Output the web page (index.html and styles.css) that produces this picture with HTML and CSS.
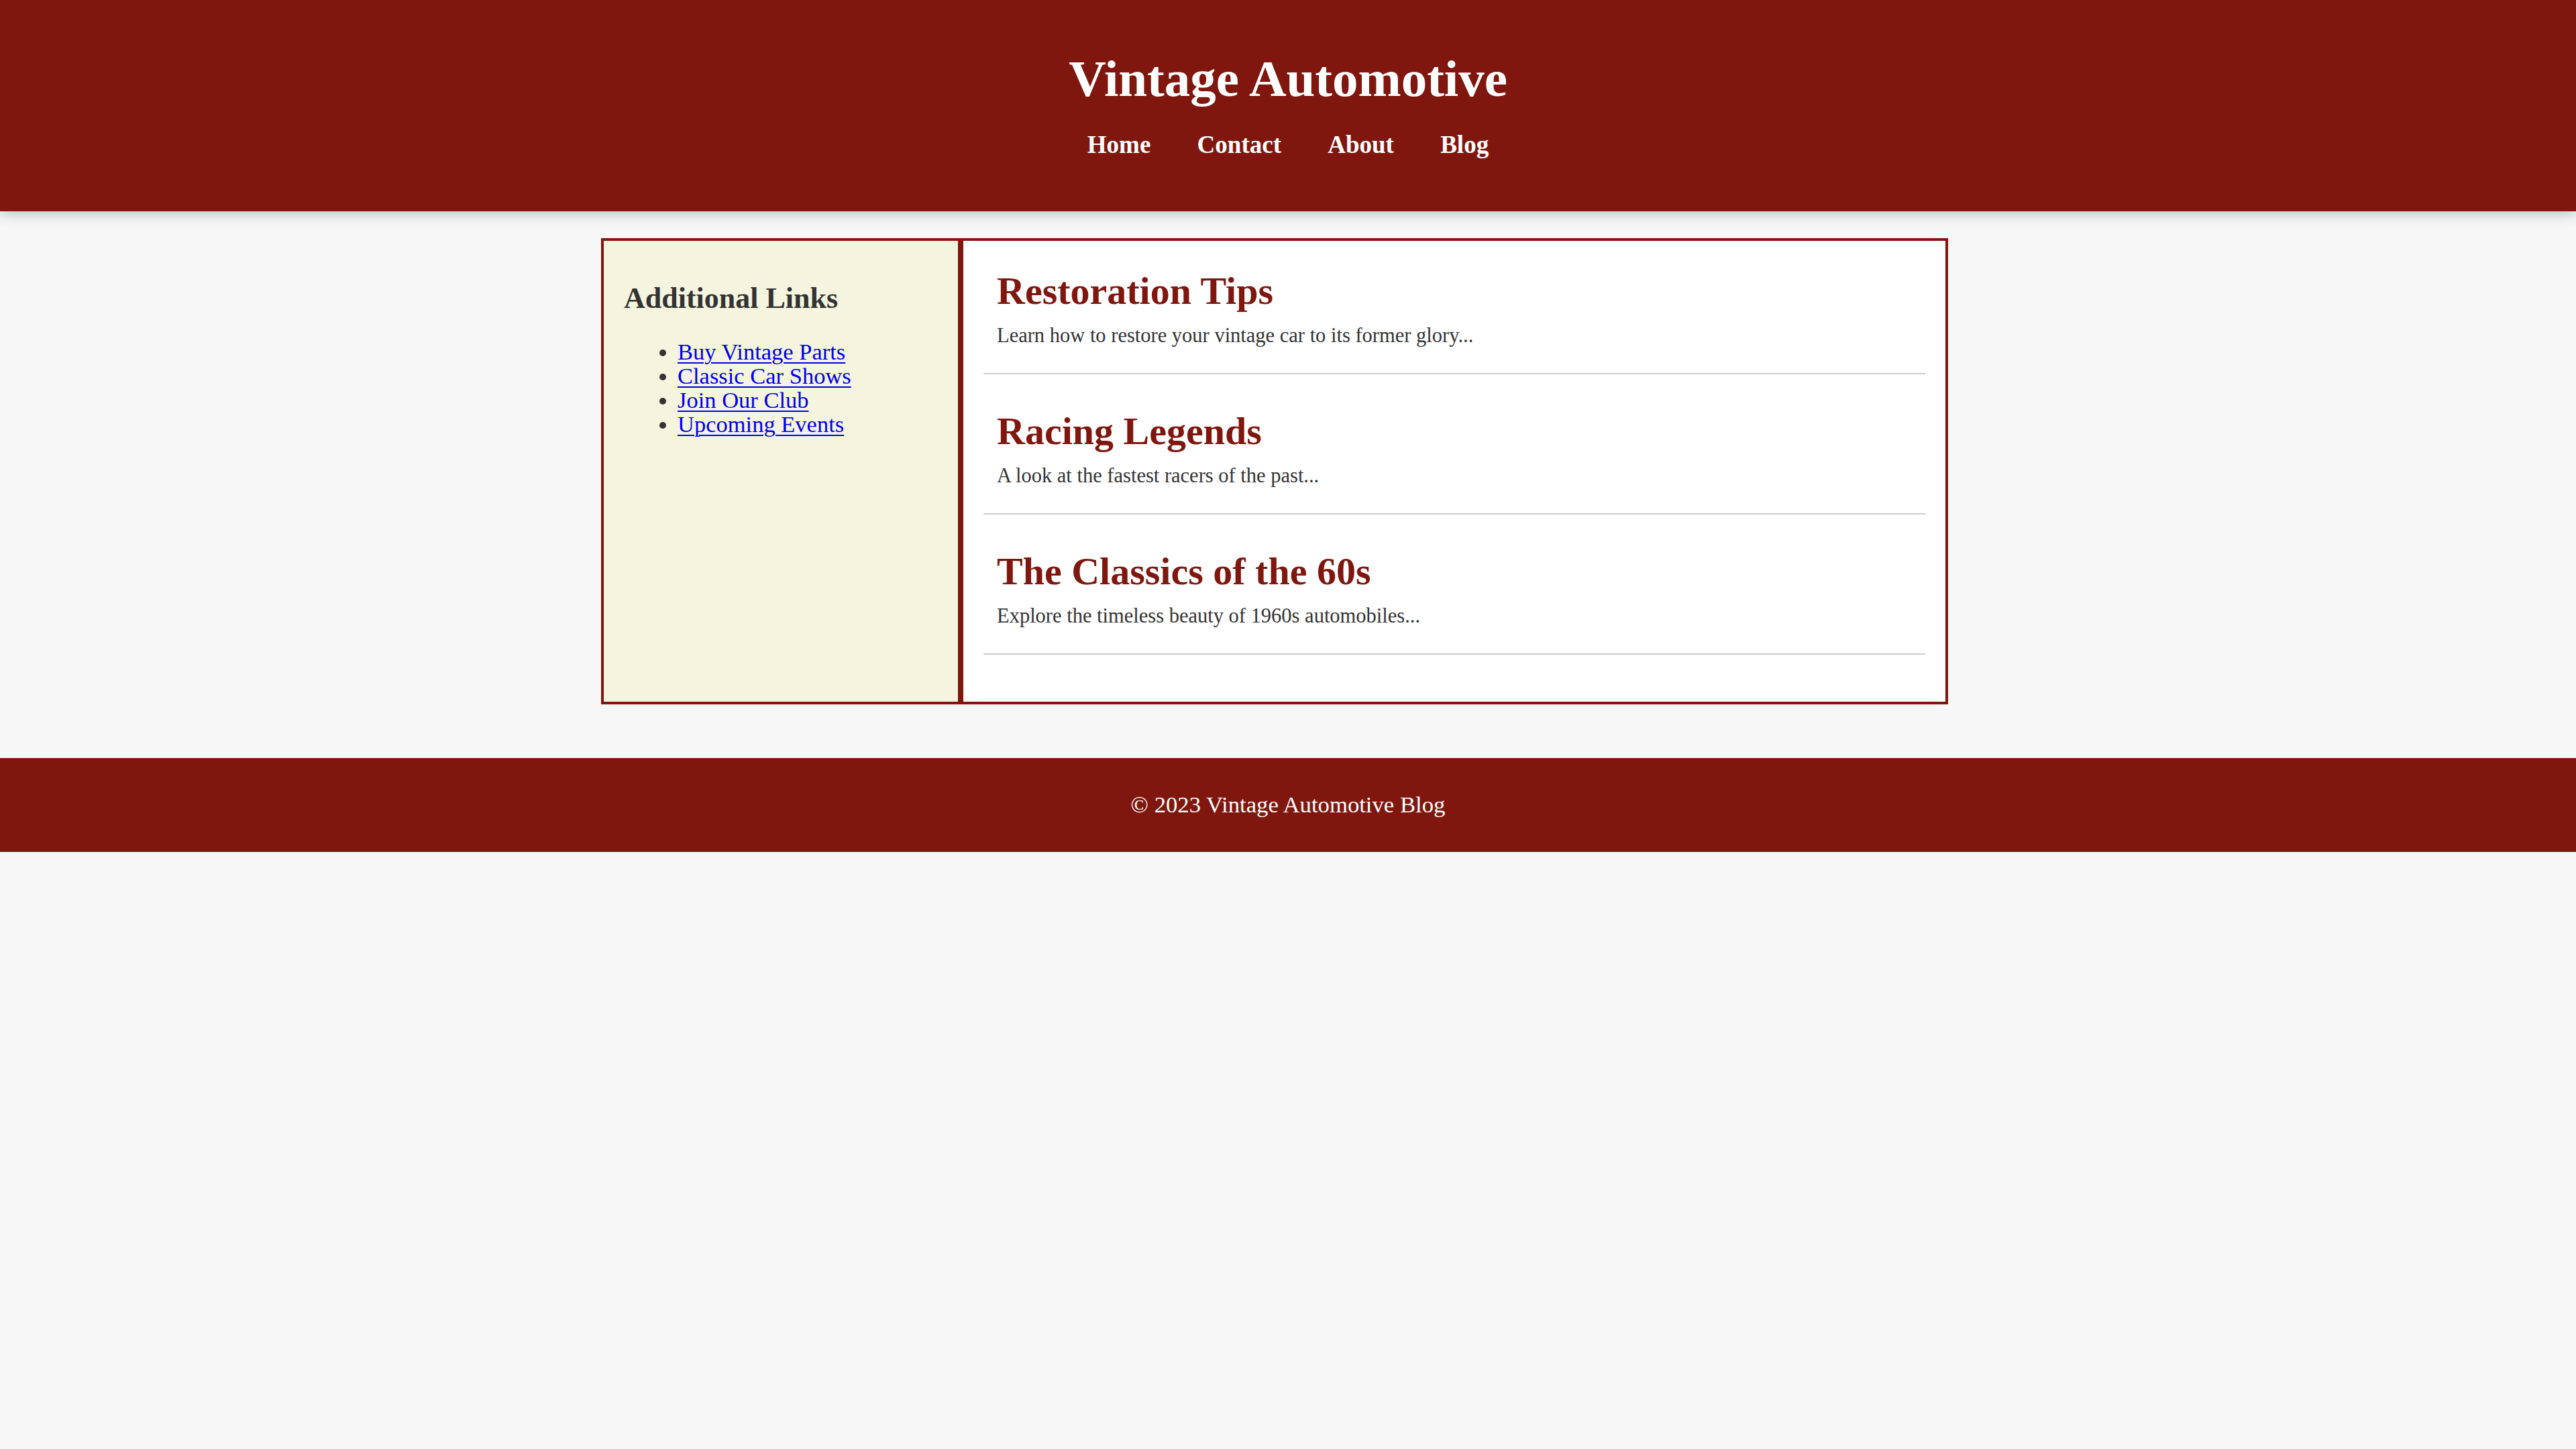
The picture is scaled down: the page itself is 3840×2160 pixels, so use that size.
FILE: index.html
```html
<!DOCTYPE html>
<html lang="en">
<head>
<meta charset="utf-8">
<title>Vintage Automotive</title>
<link rel="stylesheet" href="styles.css">
</head>
<body>
<header class="site-header">
  <h1 class="site-title">Vintage Automotive</h1>
  <nav class="site-nav">
    <a href="#">Home</a>
    <a href="#">Contact</a>
    <a href="#">About</a>
    <a href="#">Blog</a>
  </nav>
</header>
<div class="page">
  <div class="container">
    <aside class="sidebar">
      <h3 class="sidebar-title">Additional Links</h3>
      <ul class="sidebar-links">
        <li><a href="#">Buy Vintage Parts</a></li>
        <li><a href="#">Classic Car Shows</a></li>
        <li><a href="#">Join Our Club</a></li>
        <li><a href="#">Upcoming Events</a></li>
      </ul>
    </aside>
    <main class="content">
      <article class="post">
        <h2 class="post-title">Restoration Tips</h2>
        <p class="post-text">Learn how to restore your vintage car to its former glory...</p>
      </article>
      <article class="post">
        <h2 class="post-title">Racing Legends</h2>
        <p class="post-text">A look at the fastest racers of the past...</p>
      </article>
      <article class="post">
        <h2 class="post-title">The Classics of the 60s</h2>
        <p class="post-text">Explore the timeless beauty of 1960s automobiles...</p>
      </article>
    </main>
  </div>
</div>
<footer class="site-footer">
  <p class="footer-text">&copy; 2023 Vintage Automotive Blog</p>
</footer>
</body>
</html>
```

FILE: styles.css
```css
html, body {
  margin: 0;
  padding: 0;
}

body {
  background: #f7f7f7;
  font-family: "Liberation Serif", "Times New Roman", serif;
  color: #333;
}

.site-header {
  background: #7f170f;
  color: #fff;
  text-align: center;
  padding: 74px 0 79px;
  box-shadow: 0 4px 20px rgba(0, 0, 0, 0.22);
  position: relative;
}

.site-title {
  margin: 0 0 36px;
  font-size: 77px;
  line-height: 86px;
  font-weight: bold;
}

.site-nav {
  font-size: 37px;
  line-height: 40px;
  font-weight: bold;
}

.site-nav a {
  color: #fff;
  text-decoration: none;
  margin: 0 30px;
}

.page {
  padding-right: 40px;
}

.container {
  display: flex;
  width: 2008px;
  margin: 40px auto 80px;
}

.sidebar {
  box-sizing: border-box;
  width: 536px;
  flex: none;
  background: #f5f5df;
  border: 4px solid #7f170f;
  padding: 30px;
}

.sidebar-title {
  margin: 31px 0 0;
  font-size: 44px;
  line-height: 50px;
  font-weight: bold;
  color: #333;
}

.sidebar-links {
  margin: 36px 0 0;
  padding-left: 80px;
  font-size: 34.5px;
  line-height: 36px;
}

.sidebar-links a {
  color: #0000ee;
  text-decoration: underline;
  text-decoration-thickness: 2px;
  text-underline-offset: 4px;
}

.content {
  flex: 1;
  background: #fff;
  border: 4px solid #7f170f;
  padding: 30px;
}

.post {
  padding: 13px 20px 38px;
  margin-bottom: 40px;
  border-bottom: 2px solid #cccccc;
}

.post-title {
  margin: 0 0 16px;
  font-size: 58px;
  line-height: 64px;
  font-weight: bold;
  color: #7f170f;
}

.post-text {
  margin: 0;
  font-size: 30.5px;
  line-height: 36px;
  color: #333;
}

.site-footer {
  background: #7f170f;
  color: #fff;
  text-align: center;
  padding: 50px 0;
}

.footer-text {
  margin: 0;
  font-size: 34.7px;
  line-height: 40px;
}
```
